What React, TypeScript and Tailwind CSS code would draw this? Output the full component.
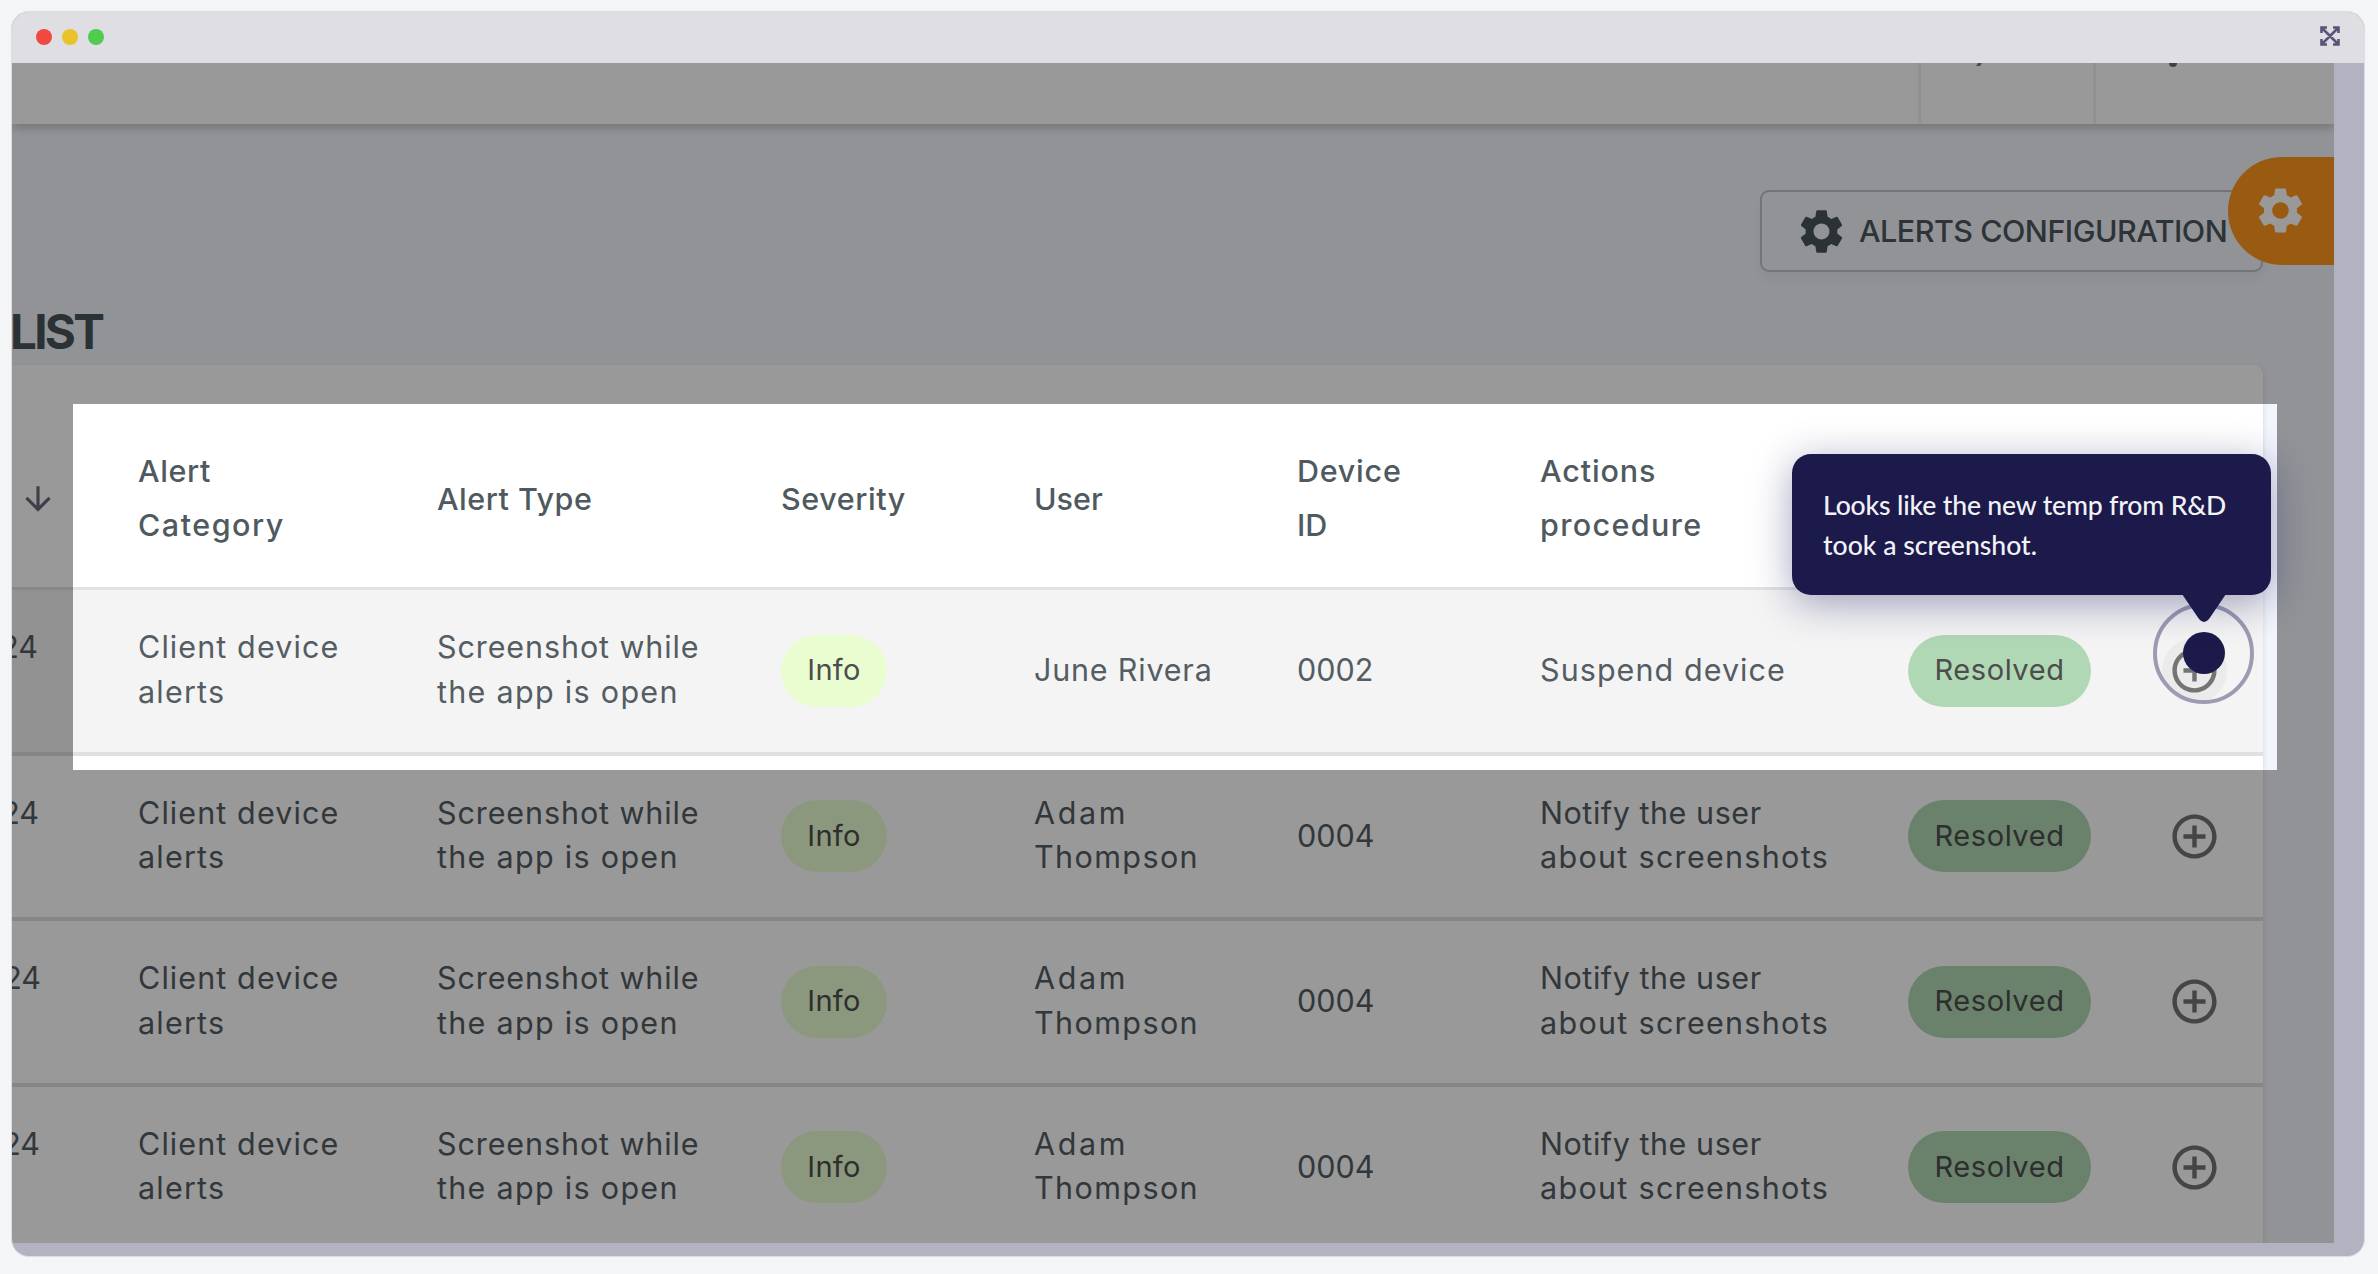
import { MdSettings, MdControlPoint, MdArrowDownward } from "react-icons/md";

const TextSpan = ({ t, c = "" }: { t: string; c?: string }) => (
  <span className={`block whitespace-nowrap ${c}`}>{t}</span>
);

type Row = {
  user: [string, string][];
  id: string;
  action: [string, string][];
  date: string;
  active?: boolean;
};

const notify: [string, string][] = [
  ["Notify the user", "tracking-[0.55px]"],
  ["about screenshots", "tracking-[1.3px]"],
];
const adam: [string, string][] = [
  ["Adam", "tracking-[2.6px]"],
  ["Thompson", "tracking-[1.4px]"],
];

const rows: Row[] = [
  { user: [["June Rivera", "tracking-[0.8px]"]], id: "0002", action: [["Suspend device", "tracking-[1.06px]"]], date: "w-[26px]", active: true },
  { user: adam, id: "0004", action: notify, date: "w-[27px]" },
  { user: adam, id: "0004", action: notify, date: "w-[29px]" },
  { user: adam, id: "0004", action: notify, date: "w-[28px]" },
];

const cols = "grid grid-cols-[126px_299px_344px_253px_263px_243px_368px_254px_101px] items-center";

function AlertRow({ row }: { row: Row }) {
  const lift = row.active ? "" : "-mt-[2px]";
  return (
    <div className={`${cols} h-[165.5px] shrink-0 border-b-[4px] border-[#e0e0e0] text-[30.5px] leading-[44.7px] text-[#545d63] ${row.active ? "bg-[#f4f4f4]" : "bg-white"}`}>
      <div className="-mt-[2px] h-[89.4px]">
        <div className={`flex justify-end overflow-hidden ${row.date}`}>24</div>
      </div>
      <div className="-mt-[2px]">
        <TextSpan t="Client device" c="tracking-[1.1px]" />
        <TextSpan t="alerts" c="tracking-[1.2px]" />
      </div>
      <div className="-mt-[2px]">
        <TextSpan t="Screenshot while" c="tracking-[0.9px]" />
        <TextSpan t="the app is open" c="tracking-[1.3px]" />
      </div>
      <div className="flex h-[72px] w-[106px] items-center justify-center rounded-full bg-[#e9fdd0] text-[29px] tracking-[0.3px] text-[#4d4d4d]">Info</div>
      <div className={lift}>{row.user.map(([t, c]) => <TextSpan key={t} t={t} c={c} />)}</div>
      <div>{row.id}</div>
      <div className={lift}>{row.action.map(([t, c]) => <TextSpan key={t} t={t} c={c} />)}</div>
      <div className="flex h-[72px] w-[183px] items-center justify-center rounded-full bg-[#b1d8b4] text-[29px] tracking-[0.57px] text-[#4d4d4d]">Resolved</div>
      <div className={`flex size-[65px] items-center justify-center rounded-full ${row.active ? "bg-[#ebebeb]" : ""}`}>
        <MdControlPoint className="size-[53px] shrink-0 text-[#747474]" />
      </div>
    </div>
  );
}

export default function App() {
  return (
    <div className="h-[1274px] w-[2378px] overflow-hidden bg-[#f4f5f7] p-[11px] font-['Inter',sans-serif]">
      <div className="flex h-[1246px] w-[2354px] flex-col overflow-hidden rounded-[18px] border border-[#dcdce2] bg-[#b3b2c0]">
        <div className="flex h-[51px] shrink-0 items-center justify-between bg-[#dfdee3] pr-[24px] pl-[24px]">
          <div className="-mt-[2px] flex gap-[10px]">
            <i className="size-4 rounded-full bg-[#f1493f]" />
            <i className="size-4 rounded-full bg-[#ebc229]" />
            <i className="size-4 rounded-full bg-[#50cb4f]" />
          </div>
          <svg className="mt-[-3px] size-[20px] text-[#5b5479]" viewBox="0 0 20 20" fill="none" stroke="currentColor" strokeWidth="2.6">
            <path d="M1.5 7V1.5H7M13 1.5H18.5V7M18.5 13V18.5H13M7 18.5H1.5V13M2 2L18 18M18 2L2 18" />
          </svg>
        </div>
        <div className="relative flex h-[1180px] w-[2322px] shrink-0 flex-col overflow-hidden bg-[#f2f5fc]">
          <div className="z-10 flex h-[61px] shrink-0 justify-end bg-white shadow-[0_4px_9px_rgba(0,0,0,0.2)]">
            <div className="h-full w-[175px] border-l-3 border-[#f2f2f2]">
              <div className="ml-[56px] h-[3px] w-[4px] -skew-x-[30deg] bg-[#7d8090]" />
            </div>
            <div className="h-full w-[241px] border-l-3 border-[#f2f2f2]">
              <div className="ml-[73px] h-[4px] w-[8px] rounded-b-full bg-[#6a6e82]" />
            </div>
          </div>
          <div className="flex h-[148px] shrink-0 items-end justify-end pr-[71px]">
            <div className="flex h-[82px] w-[503px] items-center rounded-[9px] border-2 border-[#c0c1c6] pl-[33px] text-[30.5px] font-medium text-[#4c565b] shadow-[0_8px_12px_rgba(0,0,0,0.04)]">
              <MdSettings className="mr-[11px] size-[53px] shrink-0 text-[#48545a]" />
              <span className="whitespace-nowrap tracking-[-0.52px]">ALERTS CONFIGURATION</span>
            </div>
          </div>
          <h1 className="-ml-[2px] h-[93px] shrink-0 pt-[28px] text-[47.5px] leading-[64px] font-bold tracking-[-2.7px] text-[#48545a]">LIST</h1>
          <div className="flex w-[2251px] shrink-0 flex-col rounded-tr-[9px] bg-white shadow-[0_2px_5px_rgba(0,0,0,0.12)]">
            <div className={`${cols} h-[225px] border-b-[3px] border-[#e2e2e2] pt-[45px] text-[30.5px] leading-[53.4px] font-medium text-[#4f5a60]`}>
              <MdArrowDownward className="ml-[7px] size-[38px] text-[#6a6a7c]" />
              <div className="-mt-[2px]"><TextSpan t="Alert" c="tracking-[0.6px]" /><TextSpan t="Category" c="tracking-[1.5px]" /></div>
              <div className="tracking-[0.5px]">Alert Type</div>
              <div className="tracking-[0.57px]">Severity</div>
              <div>User</div>
              <div className="-mt-[2px]"><TextSpan t="Device" c="tracking-[0.75px]" /><TextSpan t="ID" /></div>
              <div className="-mt-[2px]"><TextSpan t="Actions" c="tracking-[0.87px]" /><TextSpan t="procedure" c="tracking-[1.35px]" /></div>
            </div>
            {rows.map((r, i) => <AlertRow key={i} row={r} />)}
          </div>
          <div className="absolute top-[94px] right-0 z-20 flex h-[108px] w-[106px] items-center rounded-l-full bg-[#ff981f] pb-[2px] pl-[25px]">
            <MdSettings className="size-[55px] text-white" />
          </div>
          <div className="absolute top-[341px] left-[61px] z-30 h-[366px] w-[2204px] shadow-[0_0_0_3000px_rgba(0,0,0,0.4)]" />
          <div className="absolute top-[539.5px] left-[2141px] z-40 flex size-[101px] items-center justify-center rounded-full border-[4px] border-[#9c9bb3]">
            <div className="size-[42px] rounded-full bg-[#1b1a4b]" />
          </div>
          <div className="absolute top-[391px] left-[1780px] z-50 h-[141px] w-[479px] rounded-[19px] bg-[#1b1a4b] pt-[31px] pl-[31px] font-['Lato',sans-serif] text-[26.6px] leading-[40px] font-medium text-[#f2f2f6] shadow-[0_8px_40px_rgba(27,30,100,0.4)]">
            <TextSpan t="Looks like the new temp from R&D" c="tracking-[-0.17px]" />
            <TextSpan t="took a screenshot." />
            <svg className="absolute top-[140px] left-[389px] h-[28px] w-[46px]" viewBox="0 0 46 28">
              <path d="M1 0H45L28 25Q23 31 18 25Z" fill="#1b1a4b" />
            </svg>
          </div>
        </div>
      </div>
    </div>
  );
}
